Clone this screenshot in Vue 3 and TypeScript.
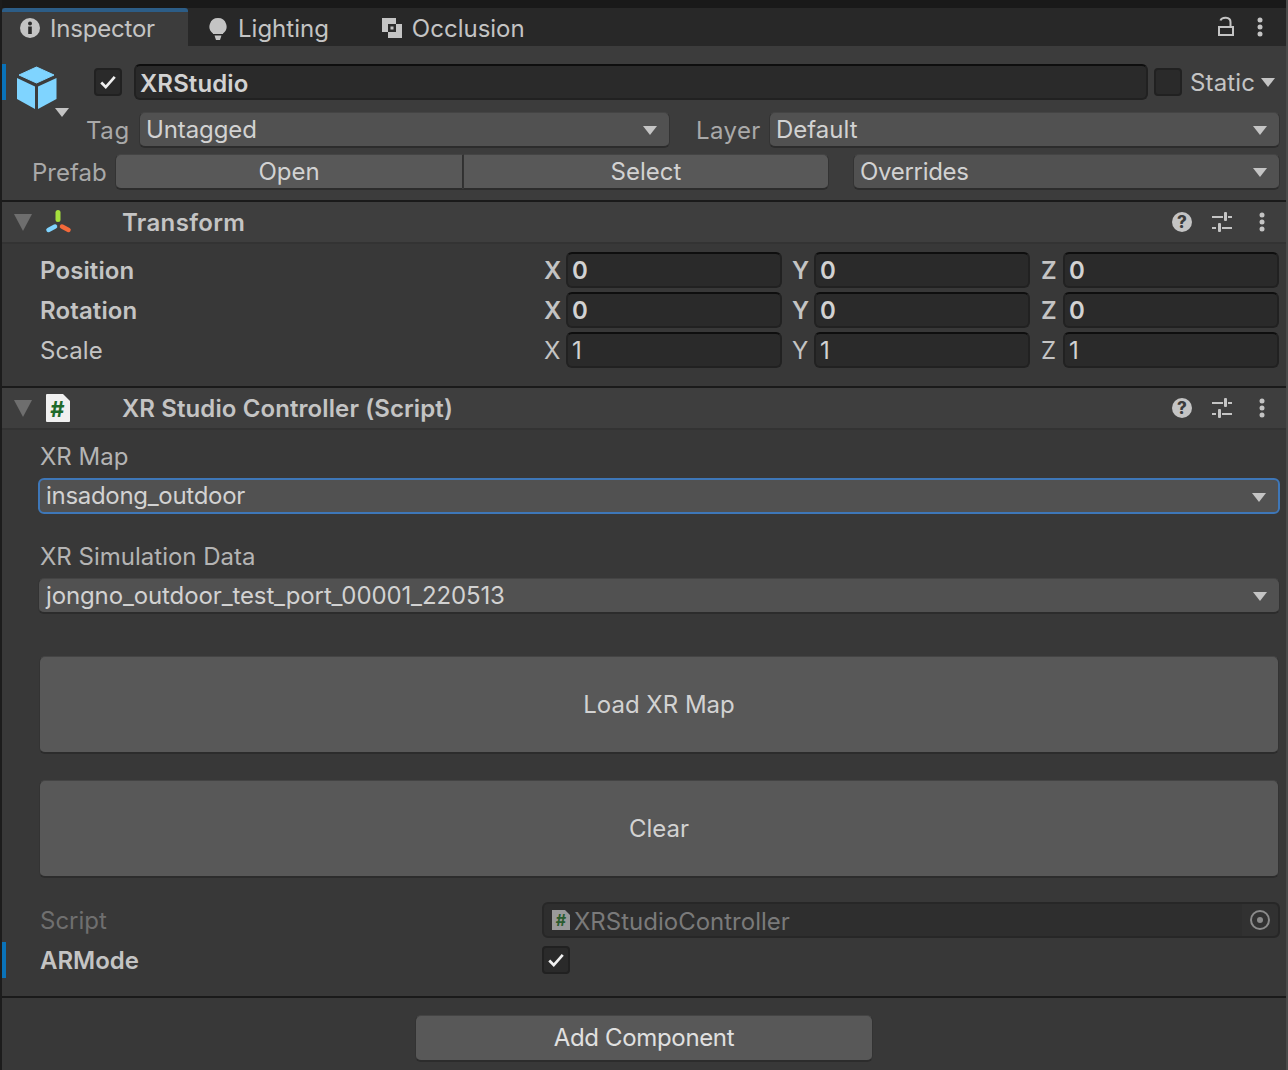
<template>
  <div class="inspector">
    <!-- tab bar -->
    <div class="tabs">
      <div class="tab active">
        <svg class="tab-icon" viewBox="0 0 20 20"><circle cx="10" cy="10" r="10" fill="#c4c4c4" /><rect x="8.2" y="8.5" width="3.6" height="7.5" fill="#2c2c2c" /><circle cx="10" cy="5.5" r="2" fill="#2c2c2c" /></svg>
        <span>Inspector</span>
      </div>
      <div class="tab lighting">
        <svg class="tab-icon" viewBox="0 0 20 24"><path d="M10 2a8.500 8.500 0 0 1 5 15.400V18H5v-.6A8.500 8.500 0 0 1 10 2z" fill="#c4c4c4" /><path d="M6.500 19.500h7L12 24H8z" fill="#c4c4c4" /></svg>
        <span>Lighting</span>
      </div>
      <div class="tab occlusion">
        <svg class="tab-icon" viewBox="0 0 20 20"><rect width="14" height="14" fill="#c4c4c4" /><rect x="6" y="6" width="14" height="14" fill="#c4c4c4" /><rect x="6" y="6" width="8" height="8" fill="#2c2c2c" /><rect x="8.500" y="8.500" width="3" height="3" fill="#c4c4c4" /></svg>
        <span>Occlusion</span>
      </div>
      <div class="tab-tools">
        <svg class="lock" viewBox="0 0 16 20"><path d="M2.500 4.500C3.500 1 12.500 0 12.500 6v4" fill="none" stroke="#c4c4c4" stroke-width="2" /><rect x="1" y="11" width="14" height="8" fill="none" stroke="#c4c4c4" stroke-width="2" /></svg>
        <svg class="dots" viewBox="0 0 6 20"><circle cx="3" cy="3" r="2.500" /><circle cx="3" cy="10" r="2.500" /><circle cx="3" cy="17" r="2.500" /></svg>
      </div>
    </div>

    <!-- game object header -->
    <section class="go-header">
      <div class="go-top">
        <i class="mark go-mark"></i>
        <div class="cube-wrap">
          <svg class="cube" viewBox="0 0 40 44">
            <path d="M19.500 1L37 9l-17.500 8L2 9z" fill="#7fd4ff" stroke="#7fd4ff" stroke-linejoin="round" />
            <path d="M0 12l18 8.500V43L0 33z" fill="#7fd4ff" />
            <path d="M39.500 12L21 20.500V43l18.500-10z" fill="#7fd4ff" />
          </svg>
          <i class="tri cube-tri"></i>
        </div>
        <div class="check"><svg viewBox="0 0 16 14"><path d="M2 7.500l4 4 8-9" fill="none" stroke="#f0f0f0" stroke-width="2.400" /></svg></div>
        <div class="field name">XRStudio</div>
        <div class="check static"></div>
        <span class="static-label">Static</span>
        <i class="tri static-tri"></i>
      </div>
      <div class="go-row">
        <span class="tag-label">Tag</span>
        <div class="drop tag-drop">Untagged<i class="tri"></i></div>
        <span class="layer-label">Layer</span>
        <div class="drop layer-drop">Default<i class="tri"></i></div>
      </div>
      <div class="go-row prefab-row">
        <span class="prefab-label">Prefab</span>
        <div class="btn-group">
          <div class="btn open">Open</div>
          <div class="btn select">Select</div>
        </div>
        <div class="drop overrides">Overrides<i class="tri"></i></div>
      </div>
    </section>

    <!-- transform -->
    <header class="comp-header">
      <i class="fold"></i>
      <div class="icon-slot">
        <svg class="comp-icon" viewBox="0 0 28 24">
          <path d="M14 2.500v7" stroke="#a5e03d" stroke-width="5" stroke-linecap="round" />
          <path d="M4.500 20l6.500-3.500" stroke="#7fd4ff" stroke-width="4.500" stroke-linecap="round" />
          <path d="M18 16.500l6.500 3.500" stroke="#f4693a" stroke-width="4.500" stroke-linecap="round" />
        </svg>
      </div>
      <span class="comp-title transform-title">Transform</span>
      <div class="comp-tools">
        <svg class="help" viewBox="0 0 20 20"><circle cx="10" cy="10" r="10" fill="#c4c4c4" /><text x="10" y="16" text-anchor="middle" class="help-q">?</text></svg>
        <svg class="sliders" viewBox="0 0 20 20"><path d="M0 5h11M16 5h4M0 16h4M10 16h10" stroke="#c4c4c4" stroke-width="2" /><rect x="12" y="0" width="3" height="9" rx="1" fill="#c4c4c4" /><rect x="6" y="11" width="3" height="9" rx="1" fill="#c4c4c4" /></svg>
        <svg class="dots" viewBox="0 0 6 20"><circle cx="3" cy="3" r="2.500" /><circle cx="3" cy="10" r="2.500" /><circle cx="3" cy="17" r="2.500" /></svg>
      </div>
    </header>
    <section class="transform-body">
      <div v-for="row in transformRows" :key="row.label" class="vec-row" :class="{ bold: row.bold }">
        <span class="vec-label">{{ row.label }}</span>
        <div class="vec-fields">
          <div v-for="(axis, i) in axes" :key="axis" class="vec-cell">
            <span class="axis">{{ axis }}</span>
            <div class="field num">{{ row.values[i] }}</div>
          </div>
        </div>
      </div>
    </section>

    <!-- script component -->
    <header class="comp-header">
      <i class="fold"></i>
      <div class="icon-slot">
        <svg class="script-icon" viewBox="0 0 24 28">
          <path d="M0 1a1 1 0 0 1 1-1h16l7 7v20a1 1 0 0 1-1 1H1a1 1 0 0 1-1-1z" fill="#f0f0f0" />
          <text x="11.500" y="22.500" text-anchor="middle" class="hash">#</text>
        </svg>
      </div>
      <span class="comp-title script-title">XR Studio Controller (Script)</span>
      <div class="comp-tools">
        <svg class="help" viewBox="0 0 20 20"><circle cx="10" cy="10" r="10" fill="#c4c4c4" /><text x="10" y="16" text-anchor="middle" class="help-q">?</text></svg>
        <svg class="sliders" viewBox="0 0 20 20"><path d="M0 5h11M16 5h4M0 16h4M10 16h10" stroke="#c4c4c4" stroke-width="2" /><rect x="12" y="0" width="3" height="9" rx="1" fill="#c4c4c4" /><rect x="6" y="11" width="3" height="9" rx="1" fill="#c4c4c4" /></svg>
        <svg class="dots" viewBox="0 0 6 20"><circle cx="3" cy="3" r="2.500" /><circle cx="3" cy="10" r="2.500" /><circle cx="3" cy="17" r="2.500" /></svg>
      </div>
    </header>
    <section class="script-body">
      <div class="prop-label">XR Map</div>
      <div class="drop wide focused">insadong_outdoor<i class="tri"></i></div>
      <div class="prop-label second">XR Simulation Data</div>
      <div class="drop wide sim">jongno_outdoor_test_port_00001_220513<i class="tri"></i></div>
      <div class="big-btn first">Load XR Map</div>
      <div class="big-btn">Clear</div>
      <div class="script-row">
        <span class="dim-label">Script</span>
        <div class="field script-field">
          <svg class="mini-script" viewBox="0 0 18 20">
            <path d="M0 0h13l5 5v15H0z" fill="#9a9a9a" />
            <text x="9" y="16" text-anchor="middle" class="hash">#</text>
          </svg>
          <span>XRStudioController</span>
          <div class="picker"><svg viewBox="0 0 20 20"><circle cx="10" cy="10" r="9" fill="none" stroke="#8a8a8a" stroke-width="2" /><circle cx="10" cy="10" r="3" fill="#8a8a8a" /></svg></div>
        </div>
      </div>
      <div class="armode-row">
        <i class="mark"></i>
        <span class="armode-label">ARMode</span>
        <div class="check"><svg viewBox="0 0 16 14"><path d="M2 7.500l4 4 8-9" fill="none" stroke="#f0f0f0" stroke-width="2.400" /></svg></div>
      </div>
    </section>

    <footer class="footer">
      <div class="add-btn">Add Component</div>
    </footer>
  </div>
</template>

<script setup lang="ts">
interface TransformRow {
  label: string
  bold: boolean
  values: string[]
}

const axes = ['X', 'Y', 'Z']

const transformRows: TransformRow[] = [
  { label: 'Position', bold: true, values: ['0', '0', '0'] },
  { label: 'Rotation', bold: true, values: ['0', '0', '0'] },
  { label: 'Scale', bold: false, values: ['1', '1', '1'] },
]
</script>

<style>
html,
body {
  margin: 0;
  background: #383838;
}
</style>

<style scoped>
.inspector {
  width: 1288px;
  height: 1070px;
  box-sizing: border-box;
  overflow: hidden;
  padding-top: 8px;
  background: #191919;
  font-family: Inter, "Liberation Sans", sans-serif;
  font-size: 24px;
  color: #c4c4c4;
  display: flex;
  flex-direction: column;
  border-left: 2px solid #1c1c1c;
  border-right: 2px solid #4a4a4a;
}

/* tabs */
.tabs {
  height: 38px;
  flex: none;
  background: #282828;
  display: flex;
  align-items: center;
}

.tab {
  height: 100%;
  box-sizing: border-box;
  display: flex;
  align-items: center;
  gap: 10px;
  padding-top: 2px;
}

.tab.active {
  width: 186px;
  padding: 0 0 2px 18px;
  background: #3c3c3c;
  border-top: 4px solid #2c5d87;
  border-radius: 3px 3px 0 0;
  letter-spacing: -0.2px;
}

.tab.lighting {
  margin-left: 20px;
}

.tab.occlusion {
  margin-left: 53px;
}

.tab-icon {
  width: 20px;
  height: 20px;
}

.lighting .tab-icon {
  height: 24px;
  width: 20px;
}

.tab-tools {
  margin-left: auto;
  display: flex;
  align-items: center;
  gap: 23px;
  padding-right: 23px;
}

.lock {
  width: 16px;
  height: 20px;
  margin-top: -2px;
}

.dots {
  width: 6px;
  height: 20px;
  fill: #c4c4c4;
}

/* header */
.go-header {
  height: 156px;
  flex: none;
  box-sizing: border-box;
  background: #3c3c3c;
  border-bottom: 2px solid #1a1a1a;
  padding-top: 18px;
}

.go-top {
  height: 36px;
  display: flex;
  align-items: center;
  position: relative;
}

.mark {
  position: absolute;
  left: 0;
  width: 4px;
  background: #0a72b8;
}

.go-mark {
  top: 0;
  height: 36px;
}

.cube-wrap {
  position: relative;
  width: 40px;
  height: 44px;
  margin-left: 15px;
  align-self: flex-start;
  margin-top: 2px;
}

.cube {
  width: 40px;
  height: 44px;
  display: block;
}

.cube-tri {
  position: absolute;
  left: 38px;
  top: 42px;
}

.check {
  width: 28px;
  height: 28px;
  box-sizing: border-box;
  background: #2a2a2a;
  border: 2px solid #212121;
  border-radius: 4px;
  display: flex;
  align-items: center;
  justify-content: center;
}

.check svg {
  width: 18px;
  height: 16px;
}

.go-top > .check {
  margin-left: 37px;
}

.go-top > .check.static {
  margin-left: 6px;
}

.field {
  box-sizing: border-box;
  background: #2a2a2a;
  border: 2px solid #212121;
  border-top-color: #0e0e0e;
  border-radius: 6px;
  color: #d2d2d2;
}

.name {
  width: 1014px;
  height: 36px;
  margin-left: 12px;
  padding-left: 4px;
  line-height: 35px;
  font-weight: 600;
  letter-spacing: 0.1px;
}

.static-label {
  margin-left: 8px;
  letter-spacing: 0.15px;
}

.static-tri {
  margin-left: 6px;
}

.tri {
  display: block;
  width: 0;
  height: 0;
  border-left: 7px solid transparent;
  border-right: 7px solid transparent;
  border-top: 9px solid #c4c4c4;
}

.go-row {
  height: 36px;
  margin-top: 12px;
  display: flex;
  align-items: center;
  position: relative;
}

.go-row .tag-label {
  margin-left: 84px;
  width: 53px;
  color: #a9a9a9;
  letter-spacing: 0.6px;
}

.drop {
  position: relative;
  box-sizing: border-box;
  height: 36px;
  background: #515151;
  border: 1px solid #333;
  border-top-color: #444;
  border-bottom: 2px solid #2c2c2c;
  border-radius: 6px;
  padding-left: 6px;
  line-height: 33px;
  color: #d2d2d2;
}

.drop .tri {
  position: absolute;
  right: 12px;
  top: 13px;
}

.tag-drop {
  width: 531px;
  letter-spacing: -0.1px;
}

.layer-label {
  margin-left: 26px;
  width: 73px;
  color: #a9a9a9;
  letter-spacing: 0.4px;
}

.layer-drop {
  width: 511px;
}

.prefab-row {
  margin-top: 6px;
}

.prefab-label {
  margin-left: 30px;
  width: 83px;
  color: #a9a9a9;
}

.btn-group {
  width: 714px;
  height: 36px;
  display: flex;
}

.btn {
  box-sizing: border-box;
  height: 36px;
  background: #585858;
  border: 1px solid #333;
  border-top-color: #444;
  border-bottom: 2px solid #2c2c2c;
  text-align: center;
  line-height: 33px;
  color: #d2d2d2;
}

.open {
  width: 349px;
  border-radius: 6px 0 0 6px;
  border-right: 2px solid #303030;
}

.select {
  flex: 1;
  margin-left: -1px;
  border-radius: 0 6px 6px 0;
}

.overrides {
  width: 427px;
  margin-left: 24px;
  letter-spacing: -0.3px;
}

/* component headers */
.comp-header {
  height: 42px;
  flex: none;
  box-sizing: border-box;
  background: #3e3e3e;
  border-bottom: 2px solid #333;
  display: flex;
  align-items: center;
}

.fold {
  width: 0;
  height: 0;
  margin-left: 12px;
  border-left: 9px solid transparent;
  border-right: 9px solid transparent;
  border-top: 17px solid #6e6e6e;
}

.icon-slot {
  width: 78px;
  margin-left: 12px;
  flex: none;
  display: flex;
}

.comp-icon {
  width: 28px;
  height: 24px;
}

.script-icon {
  width: 24px;
  height: 28px;
  margin-left: 2px;
}

.comp-title {
  font-weight: 600;
  color: #c4c4c4;
}

.transform-title {
  letter-spacing: 0.35px;
}

.script-title {
  letter-spacing: 0.1px;
}

.comp-tools {
  margin-left: auto;
  display: flex;
  align-items: center;
  gap: 20px;
  padding-right: 21px;
}

.help,
.sliders {
  width: 20px;
  height: 20px;
}

.comp-tools .dots {
  margin-left: 7px;
}

.help-q {
  font-size: 17px;
  font-weight: 800;
  fill: #3c3c3c;
  font-family: Inter, "Liberation Sans", sans-serif;
}

.hash {
  font-size: 22px;
  font-weight: 700;
  fill: #1f6a2a;
  font-family: Inter, "Liberation Sans", sans-serif;
}

/* transform */
.transform-body {
  height: 144px;
  flex: none;
  box-sizing: border-box;
  background: #383838;
  border-bottom: 2px solid #1a1a1a;
  padding-top: 6px;
}

.vec-row {
  height: 40px;
  display: flex;
  align-items: center;
}

.vec-label {
  margin-left: 38px;
  width: 504px;
  color: #c4c4c4;
}

.bold .vec-label {
  letter-spacing: 0.12px;
}

.bold .vec-label,
.bold .axis,
.bold .num {
  font-weight: 600;
}

.vec-fields {
  display: flex;
  gap: 10px;
}

.vec-cell {
  display: flex;
  align-items: center;
  width: 238px;
}

.vec-cell:last-child {
  margin-left: 1px;
}

.axis {
  width: 22px;
  flex: none;
}

.num {
  width: 216px;
  height: 36px;
  padding-left: 4px;
  line-height: 33px;
}

.vec-cell:last-child .num {
  width: 217px;
}

/* script body */
.script-body {
  flex: none;
  height: 568px;
  box-sizing: border-box;
  background: #383838;
  border-bottom: 2px solid #1a1a1a;
  padding: 12px 6px 0 36px;
}

.prop-label {
  height: 32px;
  padding-left: 2px;
  line-height: 30px;
  color: #b4b4b4;
}

.prop-label.second {
  margin-top: 28px;
}

.wide {
  margin-top: 4px;
}

.sim {
  padding-left: 7px;
  letter-spacing: -0.12px;
}

.focused {
  border: 2px solid #3e77b8;
  background: #515151;
  padding-left: 6px;
  line-height: 32px;
  letter-spacing: -0.3px;
}

.big-btn {
  height: 98px;
  margin: 26px 1px 0;
  box-sizing: border-box;
  background: #585858;
  border: 1px solid #333;
  border-top-color: #444;
  border-bottom: 2px solid #2c2c2c;
  border-radius: 6px;
  display: flex;
  align-items: center;
  justify-content: center;
  color: #d2d2d2;
}

.big-btn.first {
  margin-top: 42px;
}

.script-row {
  margin-top: 24px;
  height: 36px;
  display: flex;
  align-items: center;
}

.dim-label {
  width: 504px;
  box-sizing: border-box;
  padding-left: 2px;
  color: #6f6f6f;
}

.script-field {
  position: relative;
  flex: 1;
  height: 36px;
  background: #2e2e2e;
  border-color: #272727;
  color: #7a7a7a;
  display: flex;
  align-items: center;
  padding: 2px 0 0 8px;
  gap: 4px;
}

.mini-script {
  width: 18px;
  height: 20px;
  margin-top: -2px;
}

.mini-script .hash {
  font-size: 16px;
  fill: #2a5c2e;
}

.picker {
  position: absolute;
  right: 0;
  top: 0;
  bottom: 0;
  width: 36px;
  background: #313131;
  border-radius: 0 5px 5px 0;
  display: flex;
  align-items: center;
  justify-content: center;
}

.picker svg {
  width: 20px;
  height: 20px;
}

.armode-row {
  height: 36px;
  margin: 4px 0 0 -36px;
  display: flex;
  align-items: center;
  position: relative;
}

.armode-row .mark {
  top: 0;
  height: 36px;
}

.armode-label {
  margin-left: 38px;
  width: 502px;
  font-weight: 600;
}

/* footer */
.footer {
  flex: 1;
  background: #383838;
  padding: 17px 0 0 413px;
}

.add-btn {
  width: 458px;
  height: 47px;
  box-sizing: border-box;
  background: #585858;
  border: 1px solid #333;
  border-top-color: #444;
  border-bottom: 2px solid #2c2c2c;
  border-radius: 6px;
  text-align: center;
  line-height: 43px;
  color: #e0e0e0;
  letter-spacing: -0.35px;
}
</style>
